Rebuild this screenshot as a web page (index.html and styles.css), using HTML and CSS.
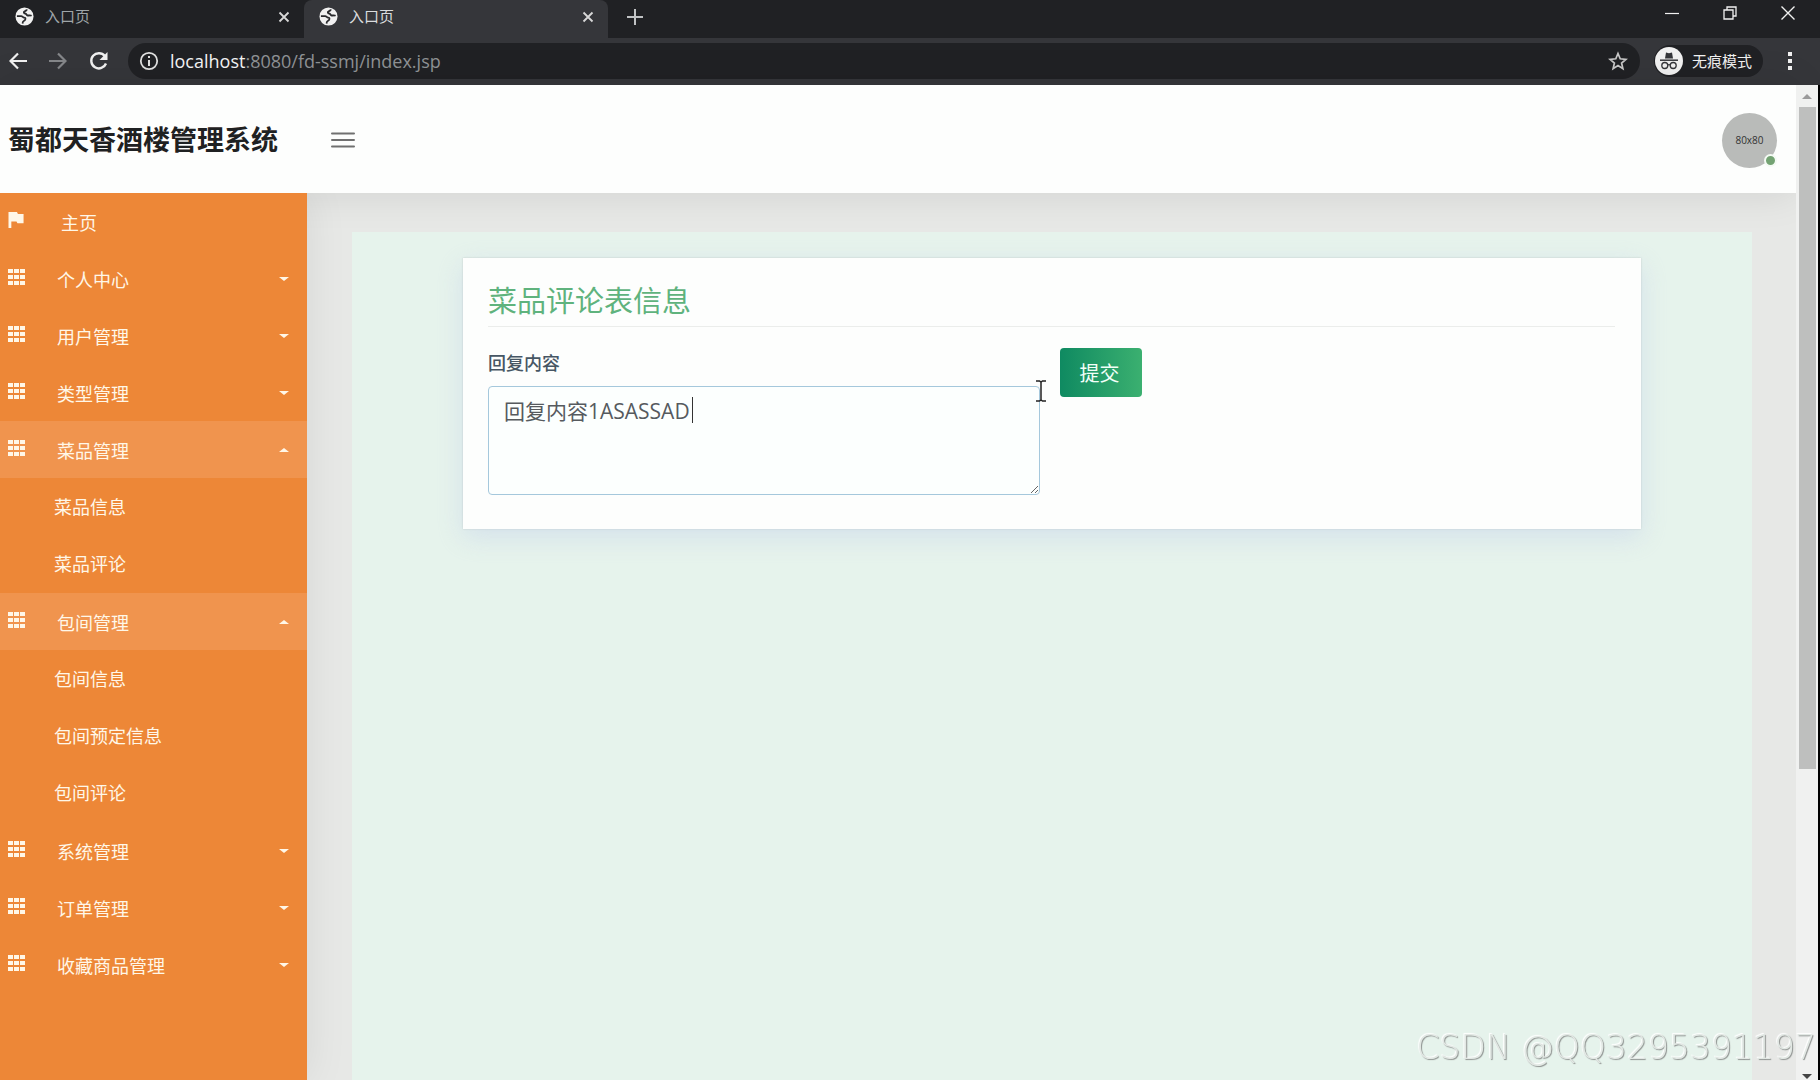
FILE: index.html
```html
<!DOCTYPE html>
<html lang="zh-CN">
<head>
<meta charset="utf-8">
<title>入口页</title>
<link rel="stylesheet" href="styles.css">
</head>
<body>
<svg class="defs" aria-hidden="true">
  <symbol id="globe" viewBox="0 0 20 20"><circle cx="10" cy="10" r="9.500" fill="#f1f1f1"/><path d="M2 9.500h4.500c1.500 0 1.700 1.500 3 1.600 1.600.1 1.800 1 1.300 2.200-.5 1.300-2.300 1-2.600 2.700l-.2 1.500" fill="none" stroke="#292a2d" stroke-width="1.800"/><path d="M12.500 2.500c-.3 1.500-1.300 1.600-2.300 2-1.500.6-.9 2.200.5 2.300 1.300.1 1.300 1.500 2.300 2 1.400.6 2.500-.6 4.500.4" fill="none" stroke="#292a2d" stroke-width="2"/></symbol>
  <symbol id="cross" viewBox="0 0 12 12"><path d="M1.500 1.500l9 9M10.500 1.500l-9 9" fill="none" stroke="currentColor" stroke-width="1.800"/></symbol>
  <symbol id="grid" viewBox="0 0 17 16"><path d="M0 0h5v4H0zM6 0h5v4H6zM12 0h5v4h-5zM0 6h5v4H0zM6 6h5v4H6zM12 6h5v4h-5zM0 12h5v4H0zM6 12h5v4H6zM12 12h5v4h-5z" fill="currentColor"/></symbol>
</svg>
<div class="browser">
  <div class="tabs">
    <div class="tab"><svg class="favicon"><use href="#globe"/></svg><span class="tab-title">入口页</span><button class="plain" aria-label="关闭标签页"><svg class="cross"><use href="#cross"/></svg></button></div>
    <div class="tab tab-active"><svg class="favicon"><use href="#globe"/></svg><span class="tab-title">入口页</span><button class="plain" aria-label="关闭标签页"><svg class="cross"><use href="#cross"/></svg></button></div>
    <button class="plain new-tab" aria-label="新标签页"><svg width="16" height="16" viewBox="0 0 16 16"><path d="M8 0v16M0 8h16" stroke="currentColor" stroke-width="2"/></svg></button>
    <div class="window-controls">
      <button class="plain" aria-label="最小化"><svg width="14" height="14" viewBox="0 0 14 14"><path d="M0 7.500h14" stroke="currentColor" stroke-width="1.200"/></svg></button>
      <button class="plain" aria-label="还原"><svg width="14" height="14" viewBox="0 0 14 14"><path d="M1 4h9v9H1zM4 4V1h9v9h-3" fill="none" stroke="currentColor" stroke-width="1.300"/></svg></button>
      <button class="plain" aria-label="关闭"><svg width="14" height="14" viewBox="0 0 14 14"><path d="M.5.5l13 13M13.500.5l-13 13" stroke="currentColor" stroke-width="1.400"/></svg></button>
    </div>
  </div>
  <div class="toolbar">
    <button class="plain nav" aria-label="后退"><svg width="18" height="18" viewBox="0 0 18 18"><path d="M18 9H2M9 1.500L1.500 9 9 16.500" fill="none" stroke="currentColor" stroke-width="2.200"/></svg></button>
    <button class="plain nav nav-off" aria-label="前进"><svg width="18" height="18" viewBox="0 0 18 18"><path d="M0 9h16M9 1.500L16.500 9 9 16.500" fill="none" stroke="currentColor" stroke-width="2.200"/></svg></button>
    <button class="plain nav" aria-label="刷新"><svg width="20" height="20" viewBox="0 0 20 20"><path d="M17 12.500A7.600 7.600 0 1 1 15.800 5" fill="none" stroke="currentColor" stroke-width="2.400"/><path d="M18.500 1v8h-8z" fill="currentColor"/></svg></button>
    <div class="address">
      <svg width="20" height="20" viewBox="0 0 20 20"><circle cx="10" cy="10" r="8.200" fill="none" stroke="#e0e0e0" stroke-width="1.800"/><path d="M9 9h2v6H9zM9 5h2v2H9z" fill="#e0e0e0"/></svg>
      <span class="url"><b>localhost</b>:8080/fd-ssmj/index.jsp</span>
      <svg width="20" height="20" viewBox="0 0 20 20"><path d="M10 2.500l2.200 5.300 5.700.5-4.300 3.700 1.300 5.600L10 14.600l-4.900 3 1.300-5.600L2.100 8.300l5.700-.5z" fill="none" stroke="#c8c8c8" stroke-width="1.700"/></svg>
    </div>
    <div class="incognito">
      <svg width="28" height="28" viewBox="0 0 28 28"><circle cx="14" cy="14" r="14" fill="#f1f1f1"/><path d="M10 11.500l1-6 3 .7 3-.7 1 6z" fill="#35363a"/><path d="M5 13.200h18" stroke="#35363a" stroke-width="1.500"/><circle cx="9.800" cy="18.500" r="3" fill="none" stroke="#35363a" stroke-width="1.300"/><circle cx="18.200" cy="18.500" r="3" fill="none" stroke="#35363a" stroke-width="1.300"/><path d="M12.800 18q1.200-.8 2.400 0" fill="none" stroke="#35363a" stroke-width="1.200"/></svg>
      <span>无痕模式</span>
    </div>
    <button class="plain more" aria-label="更多"><svg width="4" height="18" viewBox="0 0 4 18"><path d="M0 0h4v4H0zM0 7h4v4H0zM0 14h4v4H0z" fill="currentColor"/></svg></button>
  </div>
</div>
<div class="viewport">
  <div class="page">
    <header class="header">
      <h1 class="brand">蜀都天香酒楼管理系统</h1>
      <button class="plain burger" aria-label="菜单"><svg width="24" height="18" viewBox="0 0 24 18"><path d="M1 2.500h22M1 9h22M1 15.500h22" stroke="currentColor" stroke-width="2" stroke-linecap="round"/></svg></button>
      <div class="avatar">80x80<span class="online"></span></div>
    </header>
    <div class="body">
      <nav class="sidebar">
        <a class="item home" href="#"><svg class="icon" viewBox="0 0 17 17"><path d="M0 0h9l1 2h6v10H9.500L8.500 10H3v7H0z" fill="currentColor"/></svg><span>主页</span></a>
        <a class="item" href="#"><svg class="icon"><use href="#grid"/></svg><span>个人中心</span><i class="caret"></i></a>
        <a class="item" href="#"><svg class="icon"><use href="#grid"/></svg><span>用户管理</span><i class="caret"></i></a>
        <a class="item" href="#"><svg class="icon"><use href="#grid"/></svg><span>类型管理</span><i class="caret"></i></a>
        <a class="item open" href="#"><svg class="icon"><use href="#grid"/></svg><span>菜品管理</span><i class="caret"></i></a>
        <div class="submenu"><a href="#">菜品信息</a><a href="#">菜品评论</a></div>
        <a class="item open" href="#"><svg class="icon"><use href="#grid"/></svg><span>包间管理</span><i class="caret"></i></a>
        <div class="submenu"><a href="#">包间信息</a><a href="#">包间预定信息</a><a href="#">包间评论</a></div>
        <a class="item" href="#"><svg class="icon"><use href="#grid"/></svg><span>系统管理</span><i class="caret"></i></a>
        <a class="item" href="#"><svg class="icon"><use href="#grid"/></svg><span>订单管理</span><i class="caret"></i></a>
        <a class="item" href="#"><svg class="icon"><use href="#grid"/></svg><span>收藏商品管理</span><i class="caret"></i></a>
      </nav>
      <main class="main">
        <div class="panel">
          <section class="card">
            <h2 class="card-title">菜品评论表信息</h2>
            <form class="form">
              <div class="field">
                <label for="reply">回复内容</label>
                <div class="box">
                  <textarea id="reply">回复内容1ASASSAD</textarea>
                  <span class="text-caret"></span>
                  <svg class="pointer" width="10" height="22" viewBox="0 0 10 22"><path d="M0 1h3.500L5 2l1.500-1H10M5 2v18M0 21h3.500L5 20l1.500 1H10" fill="none" stroke="#222" stroke-width="1.500"/></svg>
                </div>
              </div>
              <button class="submit" type="button">提交</button>
            </form>
          </section>
        </div>
      </main>
    </div>
  </div>
  <div class="scrollbar"><i class="arrow"></i><div class="track"><div class="thumb"></div></div><i class="arrow down"></i></div>
</div>
<div class="watermark">CSDN @QQ3295391197</div>
</body>
</html>
```
FILE: styles.css
```css
* { box-sizing: border-box; }

body {
  margin: 0;
  height: 100vh;
  display: flex;
  flex-direction: column;
  overflow: hidden;
  background: #e7e8e6;
  font-family: "Open Sans", "Noto Sans CJK SC", sans-serif;
  font-size: 18px;
  color: #212529;
}

.defs { display: none; }

.plain {
  display: flex;
  align-items: center;
  justify-content: center;
  padding: 0;
  border: 0;
  background: none;
  color: inherit;
}

/* Browser chrome */
.browser { flex: none; background: #35363a; color: #f1f1f1; }

.tabs {
  display: flex;
  align-items: center;
  height: 38px;
  background: #202124;
}

.tab {
  display: flex;
  align-items: center;
  gap: 11px;
  width: 304px;
  height: 38px;
  padding: 0 14px 5px 15px;
  font-size: 15px;
  color: #9fa5a8;
}

.tab-active {
  background: #35363a;
  color: #dadcde;
  border-radius: 8px 8px 0 0;
}

.tab-title { flex: 1; padding-bottom: 2px; }
.favicon { width: 19px; height: 19px; }
.cross { width: 12px; height: 12px; color: #d8d8d8; }
.new-tab { margin: 0 19px; padding-bottom: 5px; color: #c0c2c4; }

.window-controls {
  display: flex;
  gap: 44px;
  margin-left: auto;
  padding: 0 25px 12px 0;
}

.toolbar {
  display: flex;
  align-items: center;
  height: 47px;
  padding: 0 28px 2px 0;
}

.nav { width: 41px; }
.nav:first-child { width: 35px; }
.nav-off { width: 46px; color: #85878a; }
.nav-off + .nav { width: 36px; }

.address {
  flex: 1;
  display: flex;
  align-items: center;
  gap: 11px;
  height: 36px;
  margin-left: 11px;
  padding: 0 12px 0 11px;
  border-radius: 18px;
  background: #202124;
}

.url { flex: 1; color: #8f9295; }
.url b { font-weight: 400; color: #f4f4f4; }

.incognito {
  display: flex;
  align-items: center;
  gap: 9px;
  height: 32px;
  margin-left: 14px;
  padding: 0 11px 0 1px;
  border-radius: 16px;
  background: #202124;
  font-size: 15px;
}

.more { margin-left: 25px; }

/* Page */
.viewport {
  flex: 1;
  min-height: 0;
  display: flex;
  border-right: 2px solid #000;
}

.page {
  flex: 1;
  min-width: 0;
  display: flex;
  flex-direction: column;
}

.header {
  flex: none;
  display: flex;
  align-items: center;
  height: 108px;
  padding: 2px 19px 0 8px;
  background: #fdfefd;
  box-shadow: 0 0 40px rgba(0, 0, 0, 0.1);
}

.brand { margin: 0; font-size: 27px; line-height: 40px; font-weight: 700; color: #1f2122; }
.burger { margin-left: 53px; color: #707070; }

.avatar {
  position: relative;
  width: 55px;
  height: 55px;
  margin-left: auto;
  border-radius: 50%;
  background: #b9bbb9;
  font-size: 10px;
  line-height: 55px;
  text-align: center;
  color: #333;
}

.online {
  position: absolute;
  right: 0;
  bottom: 1px;
  width: 13px;
  height: 13px;
  border: 2px solid #f4faf4;
  border-radius: 50%;
  background: #74a373;
}

.body { flex: 1; min-height: 0; display: flex; }

.sidebar {
  flex: none;
  z-index: 1;
  width: 307px;
  background: #ed8737;
  box-shadow: 0 0 40px rgba(0, 0, 0, 0.08);
  clip-path: inset(0 -60px 0 0);
  font-family: "Noto Sans CJK SC", sans-serif;
}

.sidebar a { color: #fff7e8; text-decoration: none; }

.item {
  display: flex;
  align-items: center;
  gap: 32px;
  height: 57px;
  padding: 0 18px 0 8px;
}

.home { gap: 36px; }
.icon { width: 17px; height: 16px; margin-bottom: 4px; }
.open { background: #f0944e; }

.caret {
  margin-left: auto;
  border: 5px solid transparent;
  border-top: 4px solid #fff7e8;
  border-bottom-width: 0;
}

.open .caret { border-width: 0 5px 4px; border-bottom-color: #fff7e8; }

.submenu { padding-bottom: 1px; }
.submenu a { display: block; padding-left: 54px; line-height: 57px; }

.main { flex: 1; display: flex; padding: 39px 44px 0 45px; }
.panel { flex: 1; padding: 26px 111px 0 111px; background: #e6f3ec; }

.card {
  height: 271px;
  padding: 24px 26px 24px 25px;
  background: #fdfefd;
  box-shadow: 0 8px 24px rgba(190, 205, 235, 0.45), 0 0 2px rgba(0, 0, 0, 0.15);
}

.card-title {
  margin: 0 0 21px;
  padding-bottom: 6px;
  border-bottom: 1px solid #ebedeb;
  font-size: 29px;
  line-height: 38px;
  font-weight: 400;
  color: #5fb37d;
}

.form { display: flex; align-items: flex-start; gap: 20px; }
.field { flex: 0 0 calc(50% - 12px); }

.field label {
  display: block;
  margin-bottom: 8px;
  font-weight: 500;
  line-height: 30px;
  color: #465664;
}

.box { position: relative; }

.box textarea {
  display: block;
  width: 100%;
  height: 109px;
  padding: 8px 15px;
  border: 1px solid #a5c8dc;
  border-radius: 4px;
  outline: 0;
  background: #fcfffe;
  font: 21px/32px "Open Sans", "Noto Sans CJK SC", sans-serif;
  color: #565a5e;
  resize: vertical;
}

.text-caret {
  position: absolute;
  left: 204px;
  top: 11px;
  width: 1px;
  height: 26px;
  background: #333;
}

.pointer { position: absolute; right: -6px; top: -6px; }

.submit {
  width: 82px;
  height: 49px;
  padding: 0 2px 0 0;
  border: 0;
  border-radius: 4px;
  background: linear-gradient(90deg, #0f8a61, #3bb070);
  font: 20px "Noto Sans CJK SC", sans-serif;
  color: #f2fff8;
}

/* Page scrollbar */
.scrollbar {
  flex: none;
  display: flex;
  flex-direction: column;
  align-items: center;
  width: 22px;
  padding: 9px 0 1px;
  background: #f0f1f0;
}

.arrow { border: 5px solid transparent; border-top-width: 0; border-bottom-color: #9a9a9a; }
.down { border-width: 5px 5px 0; border-top-color: #444; }
.track { flex: 1; padding: 8px 0; }
.thumb { width: 17px; height: 69%; background: #bebfbe; }

.watermark {
  position: fixed;
  right: 4px;
  bottom: 12px;
  font: 200 33px/40px "DejaVu Sans Light", "DejaVu Sans", sans-serif;
  color: #e2e8e4;
  text-shadow: 1px 1px 1px #8d918f, -1px -1px 1px #fff;
}
```
